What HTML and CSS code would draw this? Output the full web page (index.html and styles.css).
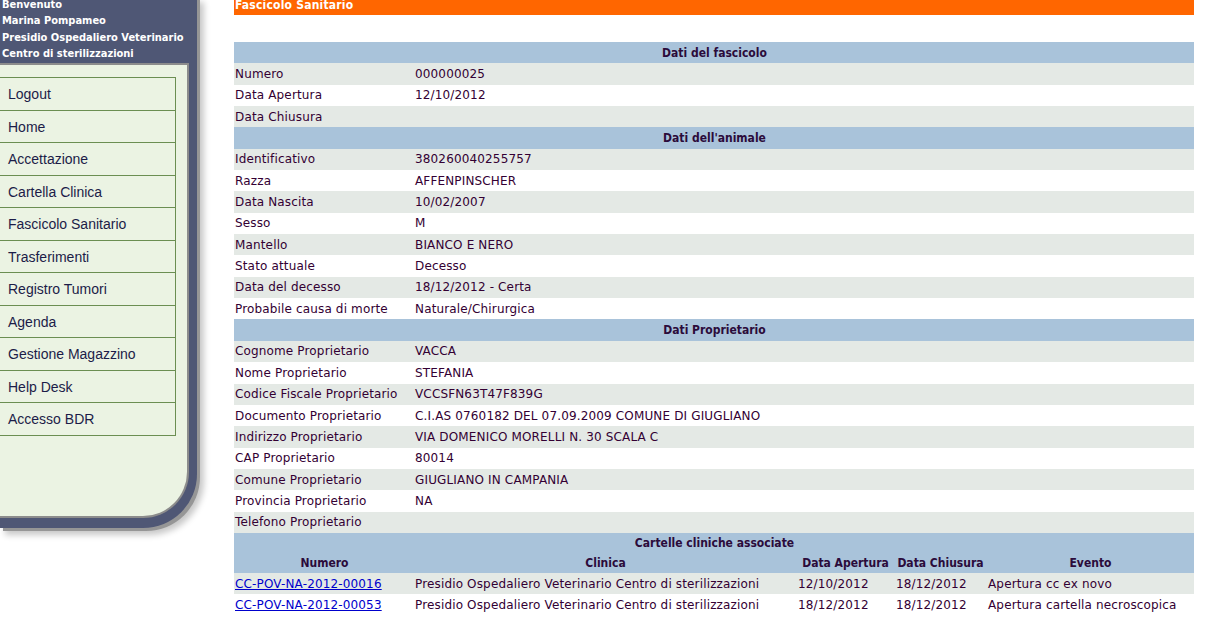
FILE: index.html
```html
<!DOCTYPE html>
<html lang="it">
<head>
<meta charset="utf-8">
<title>Fascicolo Sanitario</title>
<link rel="stylesheet" href="styles.css">
</head>
<body>
<div class="page">
  <aside class="sidebar">
    <div class="userbox">
      <div>Benvenuto</div>
      <div>Marina Pompameo</div>
      <div>Presidio Ospedaliero Veterinario</div>
      <div>Centro di sterilizzazioni</div>
    </div>
    <div class="panel">
      <ul class="menu">
        <li>Logout</li>
        <li>Home</li>
        <li>Accettazione</li>
        <li>Cartella Clinica</li>
        <li>Fascicolo Sanitario</li>
        <li>Trasferimenti</li>
        <li>Registro Tumori</li>
        <li>Agenda</li>
        <li>Gestione Magazzino</li>
        <li>Help Desk</li>
        <li>Accesso BDR</li>
      </ul>
    </div>
  </aside>
  <main class="main">
    <div class="titlebar">Fascicolo Sanitario</div>
    <table class="info">
      <colgroup><col class="c-label"><col></colgroup>
      <tr class="hdr"><th colspan="2">Dati del fascicolo</th></tr>
      <tr class="odd"><td>Numero</td><td>000000025</td></tr>
      <tr><td>Data Apertura</td><td>12/10/2012</td></tr>
      <tr class="odd"><td>Data Chiusura</td><td></td></tr>
      <tr class="hdr"><th colspan="2">Dati dell'animale</th></tr>
      <tr class="odd"><td>Identificativo</td><td>380260040255757</td></tr>
      <tr><td>Razza</td><td>AFFENPINSCHER</td></tr>
      <tr class="odd"><td>Data Nascita</td><td>10/02/2007</td></tr>
      <tr><td>Sesso</td><td>M</td></tr>
      <tr class="odd"><td>Mantello</td><td>BIANCO E NERO</td></tr>
      <tr><td>Stato attuale</td><td>Decesso</td></tr>
      <tr class="odd"><td>Data del decesso</td><td>18/12/2012 - Certa</td></tr>
      <tr><td>Probabile causa di morte</td><td>Naturale/Chirurgica</td></tr>
      <tr class="hdr"><th colspan="2">Dati Proprietario</th></tr>
      <tr class="odd"><td>Cognome Proprietario</td><td>VACCA</td></tr>
      <tr><td>Nome Proprietario</td><td>STEFANIA</td></tr>
      <tr class="odd"><td>Codice Fiscale Proprietario</td><td>VCCSFN63T47F839G</td></tr>
      <tr><td>Documento Proprietario</td><td>C.I.AS 0760182 DEL 07.09.2009 COMUNE DI GIUGLIANO</td></tr>
      <tr class="odd"><td>Indirizzo Proprietario</td><td>VIA DOMENICO MORELLI N. 30 SCALA C</td></tr>
      <tr><td>CAP Proprietario</td><td>80014</td></tr>
      <tr class="odd"><td>Comune Proprietario</td><td>GIUGLIANO IN CAMPANIA</td></tr>
      <tr><td>Provincia Proprietario</td><td>NA</td></tr>
      <tr class="odd"><td>Telefono Proprietario</td><td></td></tr>
    </table>
    <table class="cartelle">
      <colgroup>
        <col class="k-num"><col class="k-cli"><col class="k-ap"><col class="k-ch"><col>
      </colgroup>
      <tr class="hdr top"><th colspan="5">Cartelle cliniche associate</th></tr>
      <tr class="hdr sub"><th>Numero</th><th>Clinica</th><th>Data Apertura</th><th>Data Chiusura</th><th>Evento</th></tr>
      <tr class="odd"><td><a href="#">CC-POV-NA-2012-00016</a></td><td>Presidio Ospedaliero Veterinario Centro di sterilizzazioni</td><td>12/10/2012</td><td>18/12/2012</td><td>Apertura cc ex novo</td></tr>
      <tr><td><a href="#">CC-POV-NA-2012-00053</a></td><td>Presidio Ospedaliero Veterinario Centro di sterilizzazioni</td><td>18/12/2012</td><td>18/12/2012</td><td>Apertura cartella necroscopica</td></tr>
    </table>
  </main>
</div>
</body>
</html>
```

FILE: styles.css
```css
html, body {
  margin: 0;
  padding: 0;
  background: #ffffff;
}

.page {
  display: flex;
  align-items: flex-start;
  margin-top: -3px;
}

/* ---------- sidebar ---------- */
.sidebar {
  flex: 0 0 auto;
  width: 189px;
  padding: 0 8px 10px 0;
  background: #4f5775;
  border-bottom-right-radius: 54px;
  box-shadow: 3px 3px 0 0 #969696, 6px 6px 6px 1px rgba(0, 0, 0, 0.22);
}

.userbox {
  padding: 0 0 2px 2px;
  height: 66px;
  box-sizing: border-box;
  color: #ffffff;
  font-family: "DejaVu Sans Condensed", "DejaVu Sans", sans-serif;
  font-weight: bold;
  font-size: 11px;
  line-height: 16.4px;
  white-space: nowrap;
}

.panel {
  background: #ebf3e3;
  border-top: 2px solid #8c8c8c;
  border-right: 2px solid #8c8c8c;
  border-bottom: 2px solid #8c8c8c;
  border-bottom-right-radius: 46px;
  height: 455px;
  padding-top: 12px;
  box-sizing: border-box;
}

.menu {
  list-style: none;
  margin: 0 0 0 -1px;
  padding: 0;
  width: 177px;
  border-top: 1px solid #6b8e52;
}

.menu li {
  box-sizing: border-box;
  height: 32.55px;
  padding: 8px 0 0 8px;
  border: 1px solid #6b8e52;
  border-top: 0;
  font-family: "Liberation Sans", Arial, sans-serif;
  font-size: 14px;
  line-height: 16px;
  color: #1c1c48;
}

/* ---------- main ---------- */
.main {
  flex: 0 0 auto;
  width: 960px;
  margin-left: 37px;
  font-family: "DejaVu Sans", sans-serif;
  font-size: 12px;
  letter-spacing: 0.15px;
  color: #330033;
}

.titlebar {
  background: #ff6600;
  color: #ffffff;
  font-family: "DejaVu Sans Condensed", "DejaVu Sans", sans-serif;
  font-weight: bold;
  font-size: 12px;
  letter-spacing: 0.2px;
  height: 18px;
  line-height: 17px;
  padding-left: 1px;
}

table {
  width: 100%;
  border-collapse: collapse;
  border-spacing: 0;
  table-layout: fixed;
}

.info {
  margin-top: 27px;
}

.c-label { width: 180px; }

td, th {
  padding: 0 0 0 1px;
  height: 21.35px;
  white-space: nowrap;
  overflow: hidden;
  vertical-align: middle;
  text-align: left;
  font-weight: normal;
}

tr { background: #ffffff; }
tr.odd { background: #e4e9e5; }

tr.hdr { background: #a9c3da; }
tr.hdr th {
  text-align: center;
  font-family: "DejaVu Sans Condensed", "DejaVu Sans", sans-serif;
  font-weight: bold;
  letter-spacing: 0;
  color: #2b0b3b;
}

.cartelle tr.top th { height: 19px; padding-top: 1px; }
.cartelle tr.sub th { height: 20px; }

.k-num { width: 180px; }
.k-cli { width: 382px; }
.k-ap { width: 98px; }
.k-ch { width: 92px; }

.cartelle td, .cartelle th { padding-left: 1px; }
.cartelle td + td + td { padding-left: 2px; }

a {
  color: #0000cc;
  text-decoration: underline;
}
```
